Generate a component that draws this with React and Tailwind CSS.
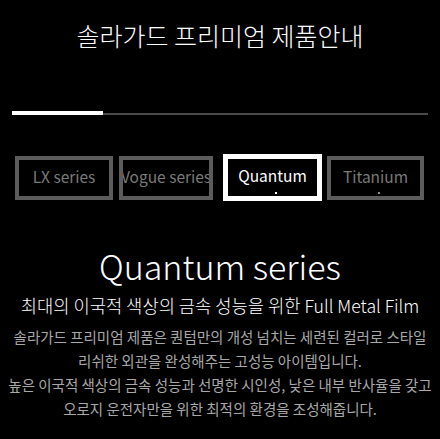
const TABS = [
  { label: "LX series", w: "w-[98px]" },
  { label: "Vogue series", w: "w-[94px]" },
  { label: "Quantum", w: "w-[99px]", active: true, dot: true },
  { label: "Titanium", w: "w-[97px]", dot: true },
];

const BODY = [
  "솔라가드 프리미엄 제품은 퀀텀만의 개성 넘치는 세련된 컬러로 스타일",
  "리쉬한 외관을 완성해주는 고성능 아이템입니다.",
  "높은 이국적 색상의 금속 성능과 선명한 시인성, 낮은 내부 반사율을 갖고",
  "오로지 운전자만을 위한 최적의 환경을 조성해줍니다.",
];

export default function App() {
  return (
    <div className="w-[440px] h-[439px] bg-black overflow-hidden font-['Noto_Sans_CJK_KR','Noto_Sans',sans-serif]">
      <h1 className="pt-[17px] text-center text-[25px] leading-[36px] font-light text-white">
        솔라가드 프리미엄 제품안내
      </h1>

      {/* progress */}
      <div className="mx-3 mt-[58px] flex items-end h-[4px]">
        <div className="w-[91px] h-[4px] bg-white" />
        <div className="flex-1 h-[2px] bg-[#4a4a4a]" />
      </div>

      {/* tabs */}
      <div className="mt-[39px] pl-[15px] flex items-center h-[47px]">
        {TABS.map((tab, i) => (
          <div
            key={tab.label}
            className={`${tab.w} ${i > 0 ? (tab.active ? "ml-[10px]" : tab.dot ? "ml-[5px]" : "ml-[6px]") : ""} ${
              tab.active ? "h-[47px] border-[5px] border-white text-white" : "h-[44px] border-[4px] border-[#5c5c5c] text-[#7a7a7a]"
            } relative flex items-center justify-center overflow-hidden whitespace-nowrap text-[15.5px] bg-black`}
          >
            <span className={tab.active ? "-mt-[4px]" : "-mt-[2px]"}>{tab.label}</span>
            {tab.dot && (
              <span className={`absolute left-1/2 ml-[2px] bottom-[2px] w-[2px] h-[2px] ${tab.active ? "bg-white" : "bg-[#8a8a8a]"}`} />
            )}
          </div>
        ))}
      </div>

      <div className="mt-[44px] text-center text-[34px] leading-[41px] font-light text-white">
        Quantum series
      </div>
      <div className="mt-[6px] text-center text-[17.7px] leading-[26px] font-light text-white">
        최대의 이국적 색상의 금속 성능을 위한 Full Metal Film
      </div>
      <div className="mt-[7px] text-center text-[14.5px] leading-[24px] text-[#a8a8a8]">
        {BODY.map((line) => (
          <p key={line} className="whitespace-nowrap">{line}</p>
        ))}
      </div>
    </div>
  );
}
